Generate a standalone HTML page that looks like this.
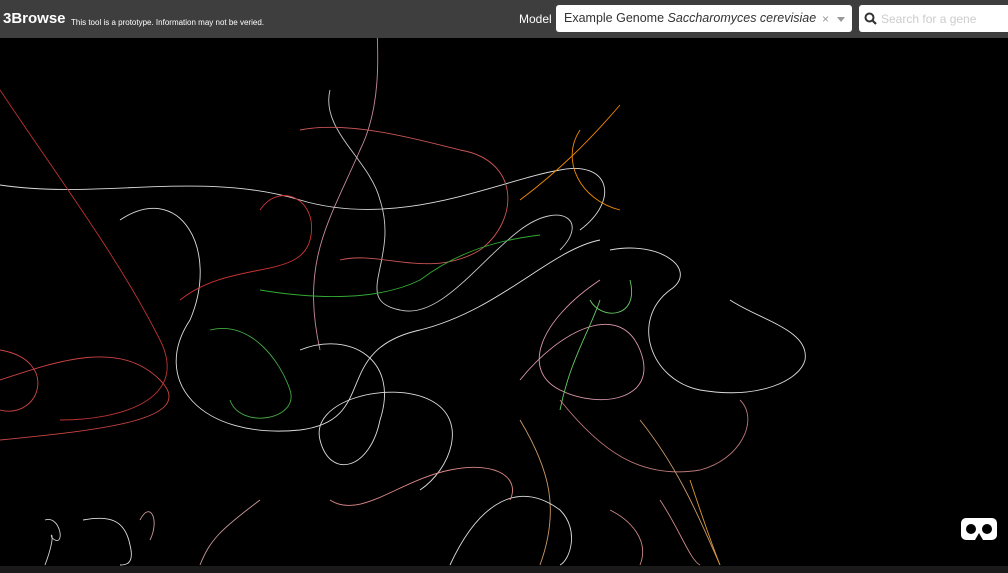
<!DOCTYPE html>
<html><head><meta charset="utf-8"><style>
html,body{margin:0;padding:0;width:1008px;height:573px;overflow:hidden;background:#000;font-family:"Liberation Sans",sans-serif}
#hdr{position:absolute;left:0;top:0;width:1008px;height:38px;background:#3e3e3e;z-index:2}
.logo{position:absolute;left:3px;top:10px;color:#fff;font-weight:bold;font-size:15px}
.tag{position:absolute;left:71px;top:18px;color:#fff;font-size:8px}
.model{position:absolute;left:519px;top:12px;color:#fff;font-size:12px}
.sel{position:absolute;left:556px;top:5px;width:296px;height:27px;background:#fff;border-radius:3px}
.sel span{position:absolute;left:8px;top:6px;font-size:12.5px;color:#333;white-space:nowrap}
.sel b{position:absolute;left:266px;top:7px;font-weight:normal;color:#999;font-size:12px}
.sel i.c{position:absolute;left:281px;top:12px;width:0;height:0;border-left:4px solid transparent;border-right:4px solid transparent;border-top:5px solid #999}
.srch{position:absolute;left:859px;top:5px;width:160px;height:27px;background:#fff;border-radius:3px}
.srch span{position:absolute;left:22px;top:7px;font-size:12px;color:#ccc}
svg{position:absolute;left:0;top:0}
.bot{position:absolute;left:0;top:566px;width:1008px;height:7px;background:#1a1a1a}
</style></head><body>
<svg width="1008" height="573" fill="none" stroke-width="0.9">
<path d="M375 0 C380 60 380 110 360 150 C330 220 300 260 320 350" stroke="#c98a9a"/>
<path d="M0 185 C100 200 200 170 300 200 C400 230 500 180 560 170 C610 160 620 200 580 230" stroke="#ddd"/>
<path d="M0 90 C60 180 120 260 160 340 C190 400 120 420 60 420" stroke="#b33"/>
<path d="M120 220 C180 180 220 250 190 320 C150 380 200 440 300 430 C380 420 330 350 420 330 C500 310 550 250 600 240" stroke="#ddd"/>
<path d="M0 350 C60 360 40 420 0 410 M0 440 C100 430 200 420 160 380 C120 340 60 360 0 380" stroke="#c44"/>
<path d="M330 90 C320 130 370 160 380 200 C400 260 350 300 400 310 C440 320 480 260 520 230 C560 200 590 220 560 250" stroke="#ccc"/>
<path d="M300 130 C350 120 420 140 460 150 C520 160 520 220 480 250 C430 280 380 250 340 260" stroke="#c55"/>
<path d="M210 330 C250 320 280 360 290 390 C300 420 240 430 230 400" stroke="#4a4"/>
<path d="M260 290 C320 300 380 300 420 280 C460 250 500 240 540 235" stroke="#3a3"/>
<path d="M580 130 C560 160 580 200 620 210" stroke="#e80"/>
<path d="M620 105 C590 140 560 170 520 200" stroke="#e80"/>
<path d="M610 250 C660 240 700 270 670 290 C630 320 650 380 700 390 C760 400 800 380 805 360 C810 330 760 320 730 300" stroke="#ddd"/>
<path d="M520 380 C560 330 620 300 640 350 C660 400 600 410 560 390 C520 370 540 320 600 280" stroke="#d9a"/>
<path d="M560 400 C600 450 640 480 700 470 C740 460 760 420 740 400" stroke="#b77"/>
<path d="M300 350 C350 330 400 360 380 420 C370 470 330 480 320 440 C310 400 390 380 430 400 C470 420 450 470 420 490" stroke="#ddd"/>
<path d="M180 300 C230 260 300 280 310 240 C320 200 280 180 260 210" stroke="#c33"/>
<path d="M520 420 C550 470 560 510 540 565 M640 420 C680 470 700 520 720 565" stroke="#c96"/>
<path d="M450 565 C480 500 520 480 560 510 C580 530 570 560 560 565" stroke="#ddd"/>
<path d="M45 520 C60 515 65 545 55 540 C45 535 60 525 45 565" stroke="#ccc"/>
<path d="M83 520 C110 515 125 520 130 545 C135 565 125 565 120 565" stroke="#ddd"/>
<path d="M140 520 C150 500 160 520 150 540 M200 565 C210 540 220 530 260 500" stroke="#c99"/>
<path d="M330 500 C360 520 400 480 450 470 C500 460 520 480 510 500" stroke="#d88"/>
<path d="M590 300 C600 320 640 320 630 280 M600 300 C590 330 570 360 560 410" stroke="#6c6"/>
<path d="M660 500 C680 530 690 560 700 565 M610 510 C630 520 650 540 640 565" stroke="#c88"/>
<path d="M690 480 C700 510 710 540 720 565" stroke="#d93"/>
</svg>
<div id="hdr">
<div class="logo">3Browse</div>
<div class="tag">This tool is a prototype. Information may not be veried.</div>
<div class="model">Model</div>
<div class="sel"><span>Example Genome <i>Saccharomyces cerevisiae</i></span><b>×</b><i class="c"></i></div>
<div class="srch"><svg width="14" height="14" style="left:5px;top:7px" viewBox="0 0 14 14"><circle cx="5.5" cy="5.5" r="4" stroke="#333" stroke-width="2" fill="none"/><path d="M8.5 8.5L12 12" stroke="#333" stroke-width="2.2"/></svg><span>Search for a gene</span></div>
</div>
<svg width="36" height="22" style="left:961px;top:518px" viewBox="0 0 36 22"><rect x="0" y="0" width="36" height="22" rx="5" fill="#fff"/><circle cx="10" cy="11" r="5" fill="#000"/><circle cx="26" cy="11" r="5" fill="#000"/><path d="M14 22 L18 15 L22 22Z" fill="#000"/></svg>
<div class="bot"></div>
</body></html>
